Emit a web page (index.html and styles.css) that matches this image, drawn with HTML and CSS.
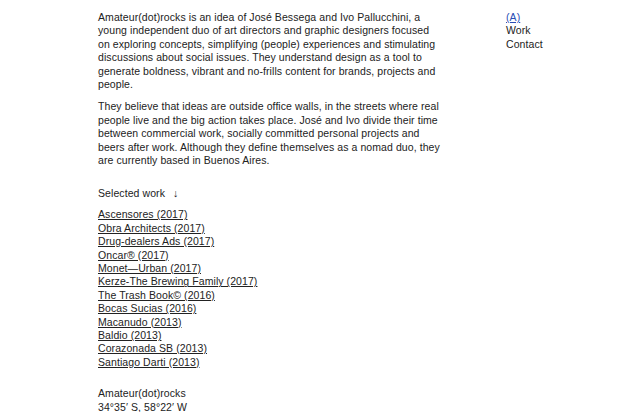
FILE: index.html
```html
<!DOCTYPE html>
<html lang="en">
<head>
<meta charset="utf-8">
<title>Amateur(dot)rocks</title>
<link rel="stylesheet" href="styles.css">
</head>
<body>
<div class="page">
  <main class="main">
    <p class="para">Amateur(dot)rocks is an idea of José Bessega and Ivo Pallucchini, a young independent duo of art directors and graphic designers focused on exploring concepts, simplifying (people) experiences and stimulating discussions about social issues. They understand design as a tool to generate boldness, vibrant and no-frills content for brands, projects and people.</p>
    <p class="para">They believe that ideas are outside office walls, in the streets where real people live and the big action takes place. José and Ivo divide their time between commercial work, socially committed personal projects and beers after work. Although they define themselves as a nomad duo, they are currently based in Buenos Aires.</p>
    <p class="selected">Selected work <span class="arrow">↓</span></p>
    <ul class="works">
      <li><a href="#">Ascensores (2017)</a></li>
      <li><a href="#">Obra Architects (2017)</a></li>
      <li><a href="#">Drug-dealers Ads (2017)</a></li>
      <li><a href="#">Oncar® (2017)</a></li>
      <li><a href="#">Monet—Urban (2017)</a></li>
      <li><a href="#">Kerze-The Brewing Family (2017)</a></li>
      <li><a href="#">The Trash Book© (2016)</a></li>
      <li><a href="#">Bocas Sucias (2016)</a></li>
      <li><a href="#">Macanudo (2013)</a></li>
      <li><a href="#">Baldio (2013)</a></li>
      <li><a href="#">Corazonada SB (2013)</a></li>
      <li><a href="#">Santiago Darti (2013)</a></li>
    </ul>
    <p class="footer">Amateur(dot)rocks<br>34°35′ S, 58°22′ W</p>
  </main>
  <nav class="nav">
    <a class="nav-a" href="#">(A)</a>
    <span>Work</span>
    <span>Contact</span>
  </nav>
</div>
</body>
</html>
```
FILE: styles.css
```css
html, body {
  margin: 0;
  padding: 0;
  background: #fff;
}
body {
  font-family: "Liberation Sans", Arial, sans-serif;
  font-size: 10.5px;
  line-height: 13.4px;
  letter-spacing: 0.08px;
  color: #222;
}
.page {
  display: flex;
  padding: 11px 0 0 98px;
}
.main {
  width: 345px;
}
.para {
  margin: 0 0 9px 0;
}
.para + .para {
  margin-bottom: 0;
}
.selected {
  margin: 20px 0 0 0;
}
.arrow {
  margin-left: 5px;
}
.works {
  list-style: none;
  margin: 7.5px 0 0 0;
  padding: 0;
}
.works a {
  color: #222;
  text-decoration: underline;
}
.footer {
  margin: 18px 0 0 0;
}
.nav {
  margin-left: 63px;
  display: flex;
  flex-direction: column;
}
.nav-a {
  color: #2a4db5;
  text-decoration: underline;
  align-self: flex-start;
}
```
